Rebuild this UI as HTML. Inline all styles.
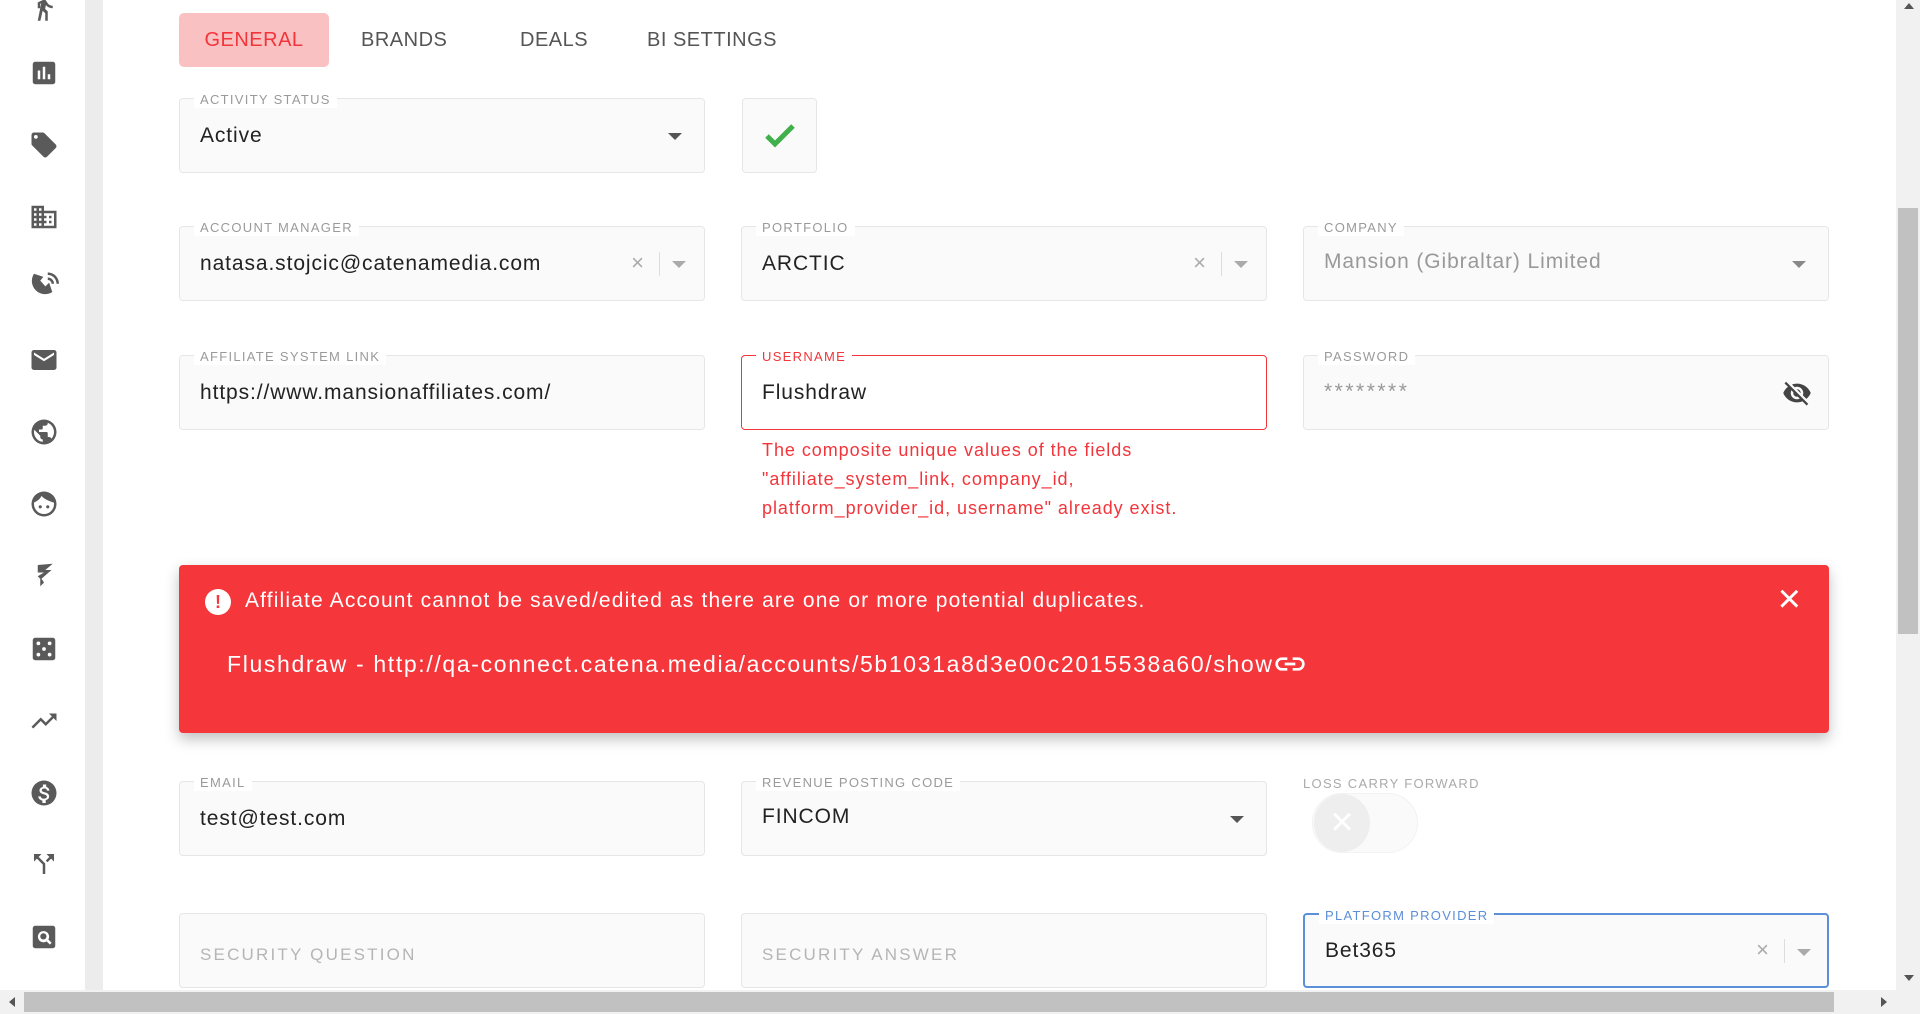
<!DOCTYPE html>
<html><head><meta charset="utf-8"><style>
*{box-sizing:border-box;margin:0;padding:0}
body{width:1920px;height:1014px;overflow:hidden;background:#fff;font-family:"Liberation Sans",sans-serif;position:relative}
.side{position:absolute;left:0;top:0;width:85px;height:990px;background:#fff}
.strip{position:absolute;left:85px;top:0;width:18px;height:990px;background:#ececec}
.ic{position:absolute;left:29px;width:30px;height:30px;fill:#5a5a5a}
.tab{position:absolute;top:13px;height:54px;line-height:54px;font-size:20px;color:#555;letter-spacing:.5px}
.f{position:absolute;height:75px;border:1px solid #e6e6e6;border-radius:4px;background:#fafafa}
.lbl{position:absolute;top:-7px;left:14px;padding:0 6px;background:#fff;font-size:13px;letter-spacing:1.3px;color:#9a9a9a;line-height:16px}
.val{position:absolute;left:20px;top:25px;font-size:21px;color:#222;letter-spacing:.9px}
.arr{position:absolute;width:0;height:0;border-left:7px solid transparent;border-right:7px solid transparent;border-top:7px solid #555}
.x{position:absolute;font-size:22px;color:#aaa}
.sep{position:absolute;width:1px;height:24px;background:#ddd}
.err{position:absolute;left:762px;font-size:18px;color:#f2353b;letter-spacing:.95px}
</style></head><body>
<div class="side">
<svg class="ic" style="top:-8px" viewBox="0 0 24 24"><path d="M13.5 5.5a2 2 0 1 0 0-4 2 2 0 0 0 0 4zM9.8 8.9 7 23h2.1l1.8-8 2.1 2v6h2v-7.5l-2.1-2 .6-3A7.3 7.3 0 0 0 19 13v-2c-1.9 0-3.5-1-4.3-2.4l-1-1.6c-.4-.6-1-1-1.7-1L7 8.3V13h2V9.6z"/></svg>
<svg class="ic" style="top:58px" viewBox="0 0 24 24"><path d="M19 3H5a2 2 0 0 0-2 2v14a2 2 0 0 0 2 2h14a2 2 0 0 0 2-2V5a2 2 0 0 0-2-2zM9 17H7v-7h2zm4 0h-2V7h2zm4 0h-2v-4h2z"/></svg>
<svg class="ic" style="top:130px" viewBox="0 0 24 24"><path d="m21.4 11.6-9-9A2 2 0 0 0 11 2H4a2 2 0 0 0-2 2v7c0 .6.2 1.1.6 1.4l9 9a2 2 0 0 0 2.8 0l7-7a2 2 0 0 0 0-2.8zM5.5 7A1.5 1.5 0 1 1 5.5 4a1.5 1.5 0 0 1 0 3z"/></svg>
<svg class="ic" style="top:202px" viewBox="0 0 24 24"><path d="M12 7V3H2v18h20V7zM6 19H4v-2h2zm0-4H4v-2h2zm0-4H4V9h2zm0-4H4V5h2zm4 12H8v-2h2zm0-4H8v-2h2zm0-4H8V9h2zm0-4H8V5h2zm10 12h-8v-2h2v-2h-2v-2h2v-2h-2V9h8zm-2-8h-2v2h2zm0 4h-2v2h2z"/></svg>
<svg class="ic" style="top:270px" viewBox="0 0 24 24"><path d="M15 2v2c3.9 0 7 3.1 7 7h2c0-5-4-9-9-9zm0 4v2c1.7 0 3 1.3 3 3h2c0-2.8-2.2-5-5-5zm-3.5-.5L4 3c-2.7 4.1-2.200 9.6 1.4 13.2 3.6 3.6 9.1 4.1 13.2 1.4l-2.5-7.5-3 3L9 8.5z"/></svg>
<svg class="ic" style="top:345px" viewBox="0 0 24 24"><path d="M20 4H4a2 2 0 0 0-2 2v12a2 2 0 0 0 2 2h16a2 2 0 0 0 2-2V6a2 2 0 0 0-2-2zm0 4-8 5-8-5V6l8 5 8-5z"/></svg>
<svg class="ic" style="top:417px" viewBox="0 0 24 24"><path d="M12 2a10 10 0 1 0 0 20 10 10 0 0 0 0-20zm-1 17.9A8 8 0 0 1 4 12c0-.6.1-1.2.2-1.8L9 15v1a2 2 0 0 0 2 2zm6.9-2.5A2 2 0 0 0 16 16h-1v-3a1 1 0 0 0-1-1H8v-2h2a1 1 0 0 0 1-1V7h2a2 2 0 0 0 2-2v-.4a8 8 0 0 1 2.9 12.8z"/></svg>
<svg class="ic" style="top:489px" viewBox="0 0 24 24"><path d="M12 2a10 10 0 1 0 0 20 10 10 0 0 0 0-20zm0 18a8 8 0 0 1-8-8c0-.4 0-.8.1-1.2C6 10 9 8 10 5.5 12 8 15.5 9.5 19.9 10.9c.1.3.1.7.1 1.1a8 8 0 0 1-8 8zM9 13a1.2 1.2 0 1 0 0 2.5A1.2 1.2 0 0 0 9 13zm6 0a1.2 1.2 0 1 0 0 2.5 1.2 1.2 0 0 0 0-2.5z"/></svg>
<svg class="ic" style="top:560px" viewBox="0 0 24 24"><path d="M7 4 19 3l-6 5 5 0-8 7 2 3-3 3 0-6-2-2 5-3H7z"/></svg>
<svg class="ic" style="top:634px" viewBox="0 0 24 24"><path d="M19 3H5a2 2 0 0 0-2 2v14a2 2 0 0 0 2 2h14a2 2 0 0 0 2-2V5a2 2 0 0 0-2-2zM7.5 18a1.5 1.5 0 1 1 0-3 1.5 1.5 0 0 1 0 3zm0-9a1.5 1.5 0 1 1 0-3 1.5 1.5 0 0 1 0 3zm4.5 4.5a1.5 1.5 0 1 1 0-3 1.5 1.5 0 0 1 0 3zm4.5 4.5a1.5 1.5 0 1 1 0-3 1.5 1.5 0 0 1 0 3zm0-9a1.5 1.5 0 1 1 0-3 1.5 1.5 0 0 1 0 3z"/></svg>
<svg class="ic" style="top:706px" viewBox="0 0 24 24"><path d="m16 6 2.3 2.3-4.9 4.9-4-4L2 16.6 3.4 18l6-6 4 4 6.3-6.3L22 12V6z"/></svg>
<svg class="ic" style="top:778px" viewBox="0 0 24 24"><path d="M12 2a10 10 0 1 0 0 20 10 10 0 0 0 0-20zm1.4 16.1V20h-2.7v-1.9c-1.7-.4-3.2-1.5-3.3-3.4h2c.1 1 .8 1.8 2.6 1.8 1.900 0 2.3-1 2.3-1.5 0-.7-.4-1.4-2.3-1.9-2.2-.5-3.6-1.4-3.6-3.2 0-1.5 1.2-2.4 2.7-2.8V5.2h2.7v1.9c1.6.4 2.5 1.7 2.5 3h-2c-.1-1-.6-1.7-2-1.7-1.3 0-2.100.6-2.100 1.4 0 .7.6 1.2 2.3 1.6 1.8.5 3.6 1.2 3.6 3.4 0 1.6-1.2 2.5-2.7 2.8z"/></svg>
<svg class="ic" style="top:849px" viewBox="0 0 24 24"><path d="M14 4l2.3 2.3-2.9 2.9 1.4 1.4 2.9-2.9L20 10V4zm-4 0H4v6l2.3-2.3 4.7 4.7V20h2v-8.4l-5.3-5.3z"/></svg>
<svg class="ic" style="top:922px" viewBox="0 0 24 24"><path d="M19 3H5a2 2 0 0 0-2 2v14a2 2 0 0 0 2 2h14a2 2 0 0 0 2-2V5a2 2 0 0 0-2-2zm-2.3 15.1-2.6-2.6A4.5 4.5 0 1 1 15.5 14l2.6 2.6zM11.5 9a2.5 2.5 0 1 0 0 5 2.5 2.5 0 0 0 0-5z"/></svg>
</div>
<div class="strip"></div>

<div class="tab" style="left:179px;width:150px;background:#f9c1c1;border-radius:5px;color:#f2353b;text-align:center">GENERAL</div>
<div class="tab" style="left:361px">BRANDS</div>
<div class="tab" style="left:520px">DEALS</div>
<div class="tab" style="left:647px">BI SETTINGS</div>

<div class="f" style="left:179px;top:98px;width:526px"><div class="lbl">ACTIVITY STATUS</div><div class="val">Active</div><div class="arr" style="right:22px;top:34px"></div></div>
<div class="f" style="left:742px;top:98px;width:75px"><svg style="position:absolute;left:21px;top:24px" width="32" height="26" viewBox="0 0 32 26"><path d="M3 13l8 8L29 3" stroke="#3fb04a" stroke-width="5" fill="none"/></svg></div>

<div class="f" style="left:179px;top:226px;width:526px"><div class="lbl">ACCOUNT MANAGER</div><div class="val">natasa.stojcic@catenamedia.com</div><div class="x" style="right:60px;top:23px">×</div><div class="sep" style="right:44px;top:25px"></div><div class="arr" style="right:18px;top:34px;border-top-color:#aaa"></div></div>
<div class="f" style="left:741px;top:226px;width:526px"><div class="lbl">PORTFOLIO</div><div class="val">ARCTIC</div><div class="x" style="right:60px;top:23px">×</div><div class="sep" style="right:44px;top:25px"></div><div class="arr" style="right:18px;top:34px;border-top-color:#aaa"></div></div>
<div class="f" style="left:1303px;top:226px;width:526px"><div class="lbl">COMPANY</div><div class="val" style="color:#999;top:23px">Mansion (Gibraltar) Limited</div><div class="arr" style="right:22px;top:34px;border-top-color:#888"></div></div>

<div class="f" style="left:179px;top:355px;width:526px"><div class="lbl">AFFILIATE SYSTEM LINK</div><div class="val">https://www.mansionaffiliates.com/</div></div>
<div class="f" style="left:741px;top:355px;width:526px;border-color:#f2353b;background:#fff"><div class="lbl" style="color:#f2353b">USERNAME</div><div class="val">Flushdraw</div></div>
<div class="f" style="left:1303px;top:355px;width:526px"><div class="lbl">PASSWORD</div><div class="val" style="color:#999;top:24px;letter-spacing:2.5px">********</div>
<svg style="position:absolute;right:14px;top:22px" width="34" height="30" viewBox="0 0 24 24"><path fill="#444" d="M12 7a5 5 0 0 1 5 5c0 .6-.1 1.3-.4 1.8l2.9 2.9A11.8 11.8 0 0 0 23 12c-1.7-4.4-6-7.5-11-7.5-1.4 0-2.7.3-4 .7l2.2 2.2c.5-.2 1.1-.4 1.8-.4zM2 4.3l2.3 2.3.5.4A11.8 11.8 0 0 0 1 12c1.7 4.4 6 7.5 11 7.5 1.5 0 3-.3 4.4-.8l.4.4 2.9 2.9 1.3-1.3L3.3 3zm5.5 5.5 1.6 1.6-.1.6a3 3 0 0 0 3 3l.6-.1 1.6 1.6c-.7.3-1.4.5-2.2.5a5 5 0 0 1-4.5-7.200zm4.3-.8 3.2 3.2V12a3 3 0 0 0-3-3z"/></svg></div>

<div class="err" style="top:440px">The composite unique values of the fields</div>
<div class="err" style="top:469px">"affiliate_system_link, company_id,</div>
<div class="err" style="top:498px">platform_provider_id, username" already exist.</div>

<div style="position:absolute;left:179px;top:565px;width:1650px;height:168px;background:#f5363b;border-radius:4px;box-shadow:0 6px 14px rgba(0,0,0,.25);color:#fff">
<div style="position:absolute;left:26px;top:24px;width:26px;height:26px;border-radius:50%;background:#fff;color:#f5363b;font-weight:bold;text-align:center;line-height:26px;font-size:18px">!</div>
<div style="position:absolute;left:66px;top:24px;font-size:21px;letter-spacing:1.15px">Affiliate Account cannot be saved/edited as there are one or more potential duplicates.</div>
<div style="position:absolute;right:28px;top:14px;font-size:40px;line-height:40px">×</div>
<div style="position:absolute;left:48px;top:86px;font-size:23px;letter-spacing:1.65px;white-space:nowrap">Flushdraw - http://qa-connect.catena.media/accounts/5b1031a8d3e00c2015538a60/show<svg width="32" height="20" viewBox="0 0 24 12" style="vertical-align:-2px"><path fill="none" stroke="#fff" stroke-width="2" d="M10 2H6a4 4 0 0 0 0 8h4M14 2h4a4 4 0 0 1 0 8h-4M8 6h8"/></svg></div>
</div>

<div class="f" style="left:179px;top:781px;width:526px"><div class="lbl">EMAIL</div><div class="val">test@test.com</div></div>
<div class="f" style="left:741px;top:781px;width:526px"><div class="lbl">REVENUE POSTING CODE</div><div class="val" style="top:23px">FINCOM</div><div class="arr" style="right:22px;top:34px"></div></div>
<div style="position:absolute;left:1303px;top:776px;font-size:13px;letter-spacing:1.3px;color:#aaa">LOSS CARRY FORWARD</div>
<div style="position:absolute;left:1312px;top:793px;width:106px;height:60px;border-radius:30px;background:#fafafa;border:1px solid #f2f2f2"></div>
<div style="position:absolute;left:1314px;top:794px;width:56px;height:58px;border-radius:50%;background:#eee;color:#fff;font-size:40px;text-align:center;line-height:56px">×</div>

<div class="f" style="left:179px;top:913px;width:526px"><div class="val" style="color:#b5b5b5;font-size:17px;letter-spacing:2.2px;top:31px">SECURITY QUESTION</div></div>
<div class="f" style="left:741px;top:913px;width:526px"><div class="val" style="color:#b5b5b5;font-size:17px;letter-spacing:2.2px;top:31px">SECURITY ANSWER</div></div>
<div class="f" style="left:1303px;top:913px;width:526px;border:2px solid #5b8fd8"><div class="lbl" style="color:#5b8fd8">PLATFORM PROVIDER</div><div class="val" style="top:24px">Bet365</div><div class="x" style="right:58px;top:22px">×</div><div class="sep" style="right:42px;top:24px"></div><div class="arr" style="right:16px;top:34px;border-top-color:#aaa"></div></div>

<div style="position:absolute;left:1896px;top:0;width:24px;height:990px;background:#f1f1f1"></div>
<div style="position:absolute;left:1898px;top:208px;width:20px;height:426px;background:#c1c1c1"></div>
<div style="position:absolute;left:0;top:990px;width:1920px;height:24px;background:#f1f1f1"></div>
<div style="position:absolute;left:24px;top:992px;width:1810px;height:20px;background:#c1c1c1"></div>
<div style="position:absolute;left:1904px;top:975px;border-left:5px solid transparent;border-right:5px solid transparent;border-top:6px solid #555"></div>
<div style="position:absolute;left:1904px;top:3px;border-left:5px solid transparent;border-right:5px solid transparent;border-bottom:6px solid #555"></div>
<div style="position:absolute;left:1881px;top:997px;border-top:5px solid transparent;border-bottom:5px solid transparent;border-left:6px solid #555"></div>
<div style="position:absolute;left:9px;top:997px;border-top:5px solid transparent;border-bottom:5px solid transparent;border-right:6px solid #555"></div>
</body></html>
